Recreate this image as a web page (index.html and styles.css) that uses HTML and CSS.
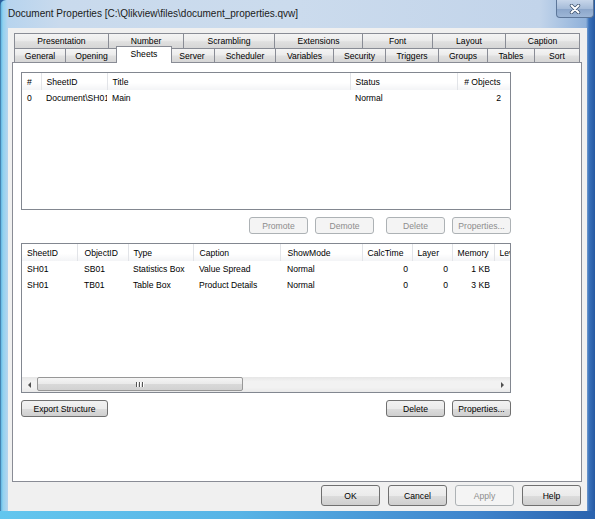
FILE: index.html
```html
<!DOCTYPE html>
<html>
<head>
<meta charset="utf-8">
<title>Document Properties</title>
<link rel="stylesheet" href="styles.css">
</head>
<body>
<div class="window">
  <div class="titlebar">
    <span class="title">Document Properties [C:\Qlikview\files\document_properties.qvw]</span>
    <span class="close">
      <svg width="14" height="10" viewBox="0 0 14 10">
        <path d="M3.5 1.5 L10.5 8.5 M10.5 1.5 L3.5 8.5" stroke="#3b4f6b" stroke-width="3.4" stroke-linecap="round"/>
        <path d="M3.5 1.5 L10.5 8.5 M10.5 1.5 L3.5 8.5" stroke="#ffffff" stroke-width="2" stroke-linecap="round"/>
      </svg>
    </span>
  </div>
  <div class="client">
    <div class="tabs">
      <div class="tabrow row-back">
        <div class="tab">Presentation</div>
        <div class="tab">Number</div>
        <div class="tab">Scrambling</div>
        <div class="tab">Extensions</div>
        <div class="tab">Font</div>
        <div class="tab">Layout</div>
        <div class="tab">Caption</div>
      </div>
      <div class="tabrow row-front">
        <div class="tab">General</div>
        <div class="tab">Opening</div>
        <div class="tab selected">Sheets</div>
        <div class="tab">Server</div>
        <div class="tab">Scheduler</div>
        <div class="tab">Variables</div>
        <div class="tab">Security</div>
        <div class="tab">Triggers</div>
        <div class="tab">Groups</div>
        <div class="tab">Tables</div>
        <div class="tab">Sort</div>
      </div>
    </div>
    <div class="page">
      <div class="list list-sheets">
        <table class="grid sheets-grid">
          <colgroup>
            <col class="c-num"><col class="c-sid"><col class="c-title"><col class="c-status"><col class="c-objs">
          </colgroup>
          <thead>
            <tr><th>#</th><th>SheetID</th><th>Title</th><th>Status</th><th class="r">#&nbsp;Objects</th></tr>
          </thead>
          <tbody>
            <tr><td>0</td><td>Document\SH01</td><td>Main</td><td>Normal</td><td class="r">2</td></tr>
          </tbody>
        </table>
      </div>
      <div class="btnrow right">
        <button class="btn disabled">Promote</button>
        <button class="btn disabled">Demote</button>
        <button class="btn disabled sep">Delete</button>
        <button class="btn disabled">Properties...</button>
      </div>
      <div class="list list-objects">
        <div class="list-body">
          <table class="grid objects-grid">
            <colgroup>
              <col class="o-sid"><col class="o-oid"><col class="o-type"><col class="o-cap"><col class="o-mode"><col class="o-calc"><col class="o-layer"><col class="o-mem"><col class="o-level">
            </colgroup>
            <thead>
              <tr><th>SheetID</th><th>ObjectID</th><th>Type</th><th>Caption</th><th>ShowMode</th><th>CalcTime</th><th>Layer</th><th>Memory</th><th>Level</th></tr>
            </thead>
            <tbody>
              <tr><td>SH01</td><td>SB01</td><td>Statistics Box</td><td>Value Spread</td><td>Normal</td><td class="r">0</td><td class="r">0</td><td class="r">1 KB</td><td></td></tr>
              <tr><td>SH01</td><td>TB01</td><td>Table Box</td><td>Product Details</td><td>Normal</td><td class="r">0</td><td class="r">0</td><td class="r">3 KB</td><td></td></tr>
            </tbody>
          </table>
        </div>
        <div class="hscroll">
          <div class="sb-btn"><span class="arrow-left"></span></div>
          <div class="sb-thumb"><span class="grip"></span><span class="grip"></span><span class="grip"></span></div>
          <div class="sb-track"></div>
          <div class="sb-btn"><span class="arrow-right"></span></div>
        </div>
      </div>
      <div class="btnrow split">
        <button class="btn wide">Export Structure</button>
        <div class="btngroup">
          <button class="btn">Delete</button>
          <button class="btn">Properties...</button>
        </div>
      </div>
    </div>
    <div class="dlgbtns">
      <button class="btn big">OK</button>
      <button class="btn big">Cancel</button>
      <button class="btn big disabled">Apply</button>
      <button class="btn big">Help</button>
    </div>
  </div>
</div>
</body>
</html>
```

FILE: styles.css
```css
html, body {
  margin: 0;
  padding: 0;
}
body {
  width: 595px;
  height: 519px;
  overflow: hidden;
  font-family: "Liberation Sans", Arial, sans-serif;
  color: #000;
  background: #2a5e9c;
}
.window {
  box-sizing: border-box;
  width: 595px;
  height: 519px;
  display: flex;
  flex-direction: column;
  padding: 0 8px 8px 8px;
  border-radius: 6px 6px 0 0;
  background:
    linear-gradient(to right, #63c6ee 0, #58b4e6 40%, #3f84cc 80%, #2a63ae 100%) left bottom / 100% 8px no-repeat,
    linear-gradient(to right, #284f80 0, #62b8e4 1px, #92d2f0 3px, #b7d4ee 8px, #c9daed 60px, #cbdbed 50%, #c2d4ea 540px, #8fb1da 586px, #3a72bb 589px, #2559a3 595px);
}
.titlebar {
  height: 28px;
  flex: none;
  display: flex;
  justify-content: space-between;
  align-items: flex-start;
}
.title {
  font-size: 10px;
  line-height: 12px;
  padding-top: 8px;
  color: #1a1a1a;
  white-space: nowrap;
}
.close {
  box-sizing: border-box;
  width: 38px;
  height: 18px;
  margin-right: -7px;
  display: flex;
  align-items: center;
  justify-content: center;
  border: 1px solid #5c7699;
  border-top: none;
  border-radius: 0 0 4px 4px;
  background: linear-gradient(#c7d6ea, #a6bcd9 50%, #8aa5ca 51%, #9db6d6);
}
.close svg { display: block; }

.client {
  flex: 1;
  box-sizing: border-box;
  background: #f0f0f0;
  padding: 5px 5px 5px 4px;
  display: flex;
  flex-direction: column;
}

/* Tabs */
.tabs {
  margin: 0 2px;
  flex: none;
}
.tabrow {
  display: grid;
  font-size: 8.6px;
}
.row-back {
  grid-template-columns: 95px 75px 91px 88px 70px 73px 74px;
  height: 15px;
}
.row-front {
  grid-template-columns: 52px 52px 52px 45px 61px 58px 52px 53px 49px 47px 45px;
  height: 14px;
}
.tab {
  box-sizing: border-box;
  border-top: 1px solid #898c95;
  border-right: 1px solid #898c95;
  background: linear-gradient(#f4f4f4, #ececec 45%, #e0e0e0 55%, #d6d6d6);
  display: flex;
  align-items: center;
  justify-content: center;
  white-space: nowrap;
  overflow: hidden;
}
.tab:first-child {
  border-left: 1px solid #898c95;
}
.tab.selected {
  position: relative;
  z-index: 2;
  margin: -2px -2px -1px -2px;
  border-left: 1px solid #898c95;
  background: #ffffff;
  align-items: flex-start;
  padding-top: 2px;
}

/* Page */
.page {
  flex: none;
  box-sizing: border-box;
  height: 420px;
  border: 1px solid #898c95;
  background: #ffffff;
  padding: 9px 8px;
  display: flex;
  flex-direction: column;
  width: 570px;
}
.list {
  box-sizing: border-box;
  width: 490px;
  border: 1px solid #828790;
  background: #fff;
  overflow: hidden;
}
.list-sheets {
  height: 138px;
}
.list-objects {
  height: 150px;
  margin-top: 9px;
  display: flex;
  flex-direction: column;
}
.list-body {
  flex: 1;
  overflow: hidden;
}

.grid {
  table-layout: fixed;
  border-collapse: collapse;
  font-size: 8.6px;
}
.sheets-grid { width: 488px; }
.objects-grid { width: 532px; }
.grid th, .grid td {
  padding: 0 4px 0 5px;
  white-space: nowrap;
  overflow: hidden;
  text-overflow: clip;
  text-align: left;
  font-weight: normal;
}
.grid th {
  height: 17px;
  background: linear-gradient(#ffffff, #ffffff 55%, #f3f4f6);
  border-right: 1px solid #e2e4e8;
}
.grid td {
  height: 16px;
}
.grid .r { text-align: right; }
.sheets-grid th.r, .sheets-grid td.r { padding-right: 9px; }

.c-num { width: 19px; }
.c-sid { width: 66px; }
.c-title { width: 243px; }
.c-status { width: 107px; }
.c-objs { width: 53px; }

.o-sid { width: 55px; }
.o-oid { width: 51px; }
.o-type { width: 65px; }
.o-cap { width: 87px; }
.o-mode { width: 82px; }
.o-calc { width: 50px; }
.o-layer { width: 40px; }
.o-mem { width: 42px; }
.o-level { width: 60px; }

.objects-grid th:nth-child(2), .objects-grid td:nth-child(2),
.objects-grid th:nth-child(5), .objects-grid td:nth-child(5) {
  padding-left: 7px;
}
.objects-grid th:nth-child(4), .objects-grid td:nth-child(4) {
  padding-left: 6px;
}

/* Scrollbar */
.hscroll {
  flex: none;
  height: 15px;
  display: flex;
  background: linear-gradient(#e6e6e6, #f2f2f2 30%, #f2f2f2 70%, #e9e9e9);
}
.sb-btn {
  width: 15px;
  flex: none;
  display: flex;
  align-items: center;
  justify-content: center;
}
.arrow-left {
  width: 0; height: 0;
  border-top: 3px solid transparent;
  border-bottom: 3px solid transparent;
  border-right: 3px solid #505050;
}
.arrow-right {
  width: 0; height: 0;
  border-top: 3px solid transparent;
  border-bottom: 3px solid transparent;
  border-left: 3px solid #505050;
}
.sb-thumb {
  box-sizing: border-box;
  width: 206px;
  flex: none;
  height: 14px;
  margin-top: 0;
  border: 1px solid #979797;
  border-radius: 2px;
  background: linear-gradient(#f5f5f5, #eaeaea 50%, #d9d9d9 51%, #d2d2d2);
  display: flex;
  align-items: center;
  justify-content: center;
  gap: 1px;
}
.grip {
  width: 1px;
  height: 5px;
  background: #555;
  box-shadow: 1px 0 0 #fff;
  margin-right: 1px;
}
.sb-track { flex: 1; }

/* Buttons */
.btnrow {
  display: flex;
  width: 490px;
  margin-top: 7px;
  height: 17px;
}
.btnrow.right {
  justify-content: flex-end;
  gap: 7px;
}
.btnrow.right .sep { margin-left: 5px; }
.btnrow.split {
  justify-content: space-between;
}
.btngroup {
  display: flex;
  gap: 7px;
}
.btn {
  box-sizing: border-box;
  width: 59px;
  height: 17px;
  padding: 0;
  margin: 0;
  font-family: inherit;
  font-size: 8.6px;
  color: #000;
  border: 1px solid #707070;
  border-radius: 3px;
  background: linear-gradient(#f2f2f2, #ebebeb 50%, #dddddd 51%, #cfcfcf);
  display: flex;
  align-items: center;
  justify-content: center;
  white-space: nowrap;
}
.btn.disabled {
  border-color: #adb2b5;
  background: #f4f4f4;
  color: #8d8d8d;
}
.btn.wide { width: 87px; }
.btn.big { height: 21px; }

.dlgbtns {
  margin-top: 3px;
  display: flex;
  justify-content: flex-end;
  gap: 8px;
  padding-right: 1px;
}
```
